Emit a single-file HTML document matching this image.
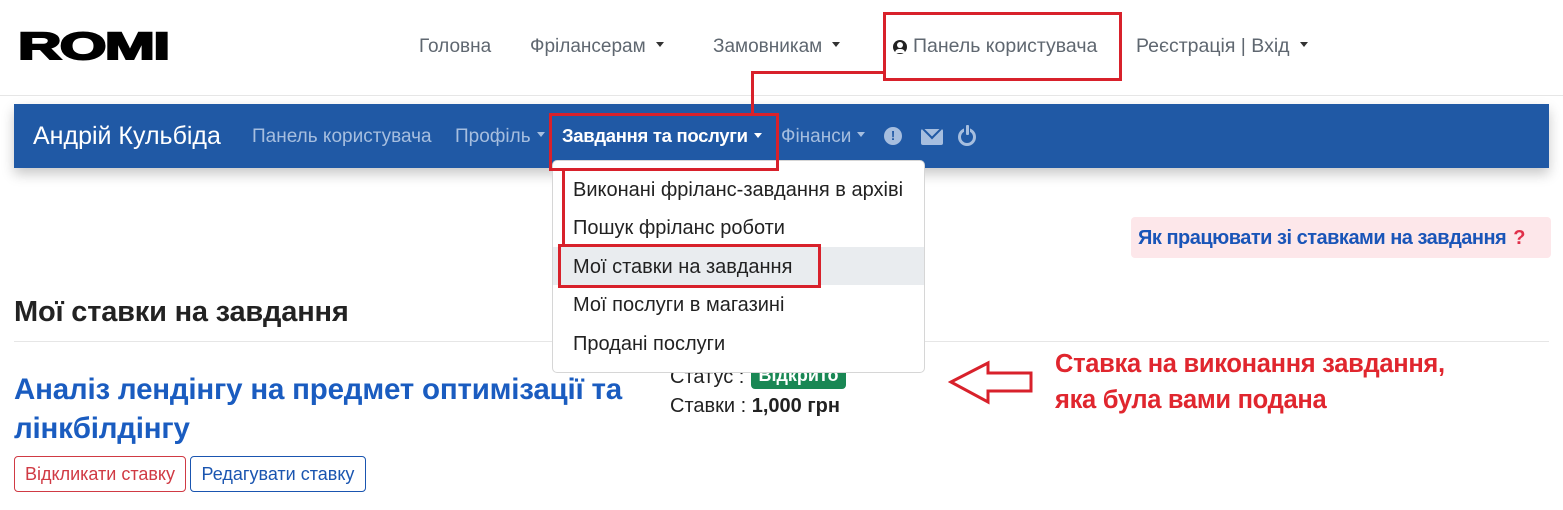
<!DOCTYPE html>
<html><head><meta charset="utf-8">
<style>
*{margin:0;padding:0;box-sizing:border-box}
body{width:1563px;height:510px;overflow:hidden;background:#fff;font-family:"Liberation Sans","DejaVu Sans",sans-serif;position:relative}
.a{position:absolute;white-space:nowrap;line-height:1}
.car{display:inline-block;width:0;height:0;border-left:4px solid transparent;border-right:4px solid transparent;border-top:5px solid currentColor;vertical-align:middle;margin-left:6px;position:relative;top:-2px}
.rb{position:absolute;border:3px solid #d8212b}
</style></head><body>
<!-- logo -->
<div class="a" style="left:18px;top:28px;font-weight:900;font-size:38px;letter-spacing:-1px;color:#000;transform:scaleX(1.58);transform-origin:left;-webkit-text-stroke:2px #000">ROMI</div>
<!-- top nav -->
<div class="a" style="left:419px;top:37px;font-size:19px;color:#5f6770">Головна</div>
<div class="a" style="left:530px;top:37px;font-size:19px;color:#5f6770">Фрілансерам<span class="car" style="margin-left:10px;color:#333"></span></div>
<div class="a" style="left:713px;top:37px;font-size:19px;color:#5f6770">Замовникам<span class="car" style="margin-left:10px;color:#333"></span></div>
<div class="a" style="left:893px;top:40px;width:14px;height:14px;border-radius:50%;background:#222"><div style="position:absolute;left:4px;top:2px;width:6px;height:6px;border-radius:50%;background:#fff"></div><div style="position:absolute;left:2px;top:9px;width:10px;height:4px;border-radius:5px 5px 0 0;background:#fff"></div></div>
<div class="a" style="left:913px;top:37px;font-size:19.5px;color:#5f6770">Панель користувача</div>
<div class="a" style="left:1136px;top:37px;font-size:19.5px;color:#5f6770">Реєстрація | Вхід<span class="car" style="margin-left:10px;color:#333"></span></div>
<div class="rb" style="left:883px;top:12px;width:239px;height:69px"></div>
<div class="a" style="left:0;top:95px;width:1563px;height:1px;background:#e6e6e6"></div>
<!-- blue bar -->
<div class="a" style="left:14px;top:104px;width:1535px;height:64px;background:#2059a5;box-shadow:0 6px 12px rgba(0,0,0,.22)"></div>
<div class="a" style="left:33px;top:124px;font-size:25px;color:#fff">Андрій Кульбіда</div>
<div class="a" style="left:252px;top:127px;font-size:19px;color:#a6bedf">Панель користувача</div>
<div class="a" style="left:455px;top:127px;font-size:19px;color:#a6bedf">Профіль<span class="car"></span></div>
<div class="a" style="left:562px;top:127px;font-size:18.5px;color:#fff;font-weight:bold;letter-spacing:-0.3px">Завдання та послуги<span class="car"></span></div>
<div class="a" style="left:781px;top:127px;font-size:19px;color:#a6bedf">Фінанси<span class="car"></span></div>
<div class="a" style="left:884px;top:127px;width:18px;height:18px;border-radius:50%;background:#a6bedf;color:#2059a5;font-weight:bold;font-size:13px;text-align:center;line-height:18px">!</div>
<div class="a" style="left:921px;top:129px;width:22px;height:16px;background:#a6bedf;border-radius:2px;overflow:hidden"><div style="position:absolute;left:3px;top:-9px;width:16px;height:16px;border:2px solid #2059a5;transform:rotate(45deg);border-top:none;border-left:none"></div></div>
<div class="a" style="left:958px;top:128px;width:18px;height:18px;border-radius:50%;border:3px solid #a6bedf"></div>
<div class="a" style="left:964px;top:123px;width:6px;height:13px;background:#2059a5"></div>
<div class="a" style="left:965.5px;top:125px;width:3px;height:10px;background:#a6bedf;border-radius:1px"></div>
<!-- heading -->
<div class="a" style="left:14px;top:298px;font-size:29px;color:#222;font-weight:bold;letter-spacing:-0.2px">Мої ставки на завдання</div>
<div class="a" style="left:14px;top:341px;width:1535px;height:1px;background:#e6e6e6"></div>
<div class="a" style="left:14px;top:370px;font-size:29.5px;font-weight:bold;color:#1a5cc0;line-height:39px;white-space:normal;width:660px;letter-spacing:-0.2px">Аналіз лендінгу на предмет оптимізації та лінкбілдінгу</div>
<div class="a" style="left:14px;top:456px;width:172px;height:36px;border:1px solid #d03a44;border-radius:4px;color:#d03a44;font-size:18px;text-align:center;line-height:34px">Відкликати ставку</div>
<div class="a" style="left:190px;top:456px;width:176px;height:36px;border:1px solid #1a55b0;border-radius:4px;color:#1a55b0;font-size:18px;text-align:center;line-height:34px">Редагувати ставку</div>
<!-- status -->
<div class="a" style="left:751px;top:362px;width:95px;height:27px;background:#198754;border-radius:4px;color:#fff;font-weight:bold;font-size:18px;text-align:center;line-height:27px">Відкрито</div>
<div class="a" style="left:670px;top:367px;font-size:20px;color:#222">Статус :</div>
<div class="a" style="left:670px;top:396px;font-size:20px;color:#222">Ставки : <b>1,000 грн</b></div>
<!-- dropdown -->
<div class="a" style="left:552px;top:160px;width:373px;height:213px;background:#fff;border:1px solid #d6d6d6;border-radius:5px"></div>
<div class="a" style="left:553px;top:247px;width:371px;height:38px;background:#e9ecef"></div>
<div class="a" style="left:573px;top:180px;font-size:20px;color:#222">Виконані фріланс-завдання в архіві</div>
<div class="a" style="left:573px;top:218px;font-size:20px;color:#222">Пошук фріланс роботи</div>
<div class="a" style="left:573px;top:257px;font-size:20px;color:#222">Мої ставки на завдання</div>
<div class="a" style="left:573px;top:295px;font-size:20px;color:#222">Мої послуги в магазині</div>
<div class="a" style="left:573px;top:334px;font-size:20px;color:#222">Продані послуги</div>
<!-- red annotations -->
<div class="rb" style="left:549px;top:113px;width:230px;height:58px"></div>
<div class="a" style="left:751px;top:71px;width:3px;height:42px;background:#d8212b"></div>
<div class="a" style="left:751px;top:71px;width:133px;height:3px;background:#d8212b"></div>
<div class="a" style="left:562px;top:170px;width:3px;height:77px;background:#d8212b"></div>
<div class="rb" style="left:558px;top:244px;width:263px;height:44px"></div>
<!-- help -->
<div class="a" style="left:1131px;top:217px;width:420px;height:41px;background:#fde7ea;border-radius:4px"></div>
<div class="a" style="left:1138px;top:228px;font-size:20px;font-weight:bold;color:#1a55b8;letter-spacing:-0.5px">Як працювати зі ставками на завдання <span style="color:#e0304a;margin-left:2px">?</span></div>
<!-- arrow -->
<svg class="a" style="left:948px;top:360px" width="88" height="46" viewBox="0 0 88 46"><path d="M3 22 L40 3 L40 13 L83 13 L83 31 L40 31 L40 42 Z" fill="none" stroke="#d8212b" stroke-width="3"/></svg>
<div class="a" style="left:1055px;top:352px;font-size:25.5px;font-weight:bold;color:#e0262e;letter-spacing:-0.3px">Ставка на виконання завдання,</div>
<div class="a" style="left:1055px;top:388px;font-size:25.5px;font-weight:bold;color:#e0262e;letter-spacing:-0.3px">яка була вами подана</div>
</body></html>
